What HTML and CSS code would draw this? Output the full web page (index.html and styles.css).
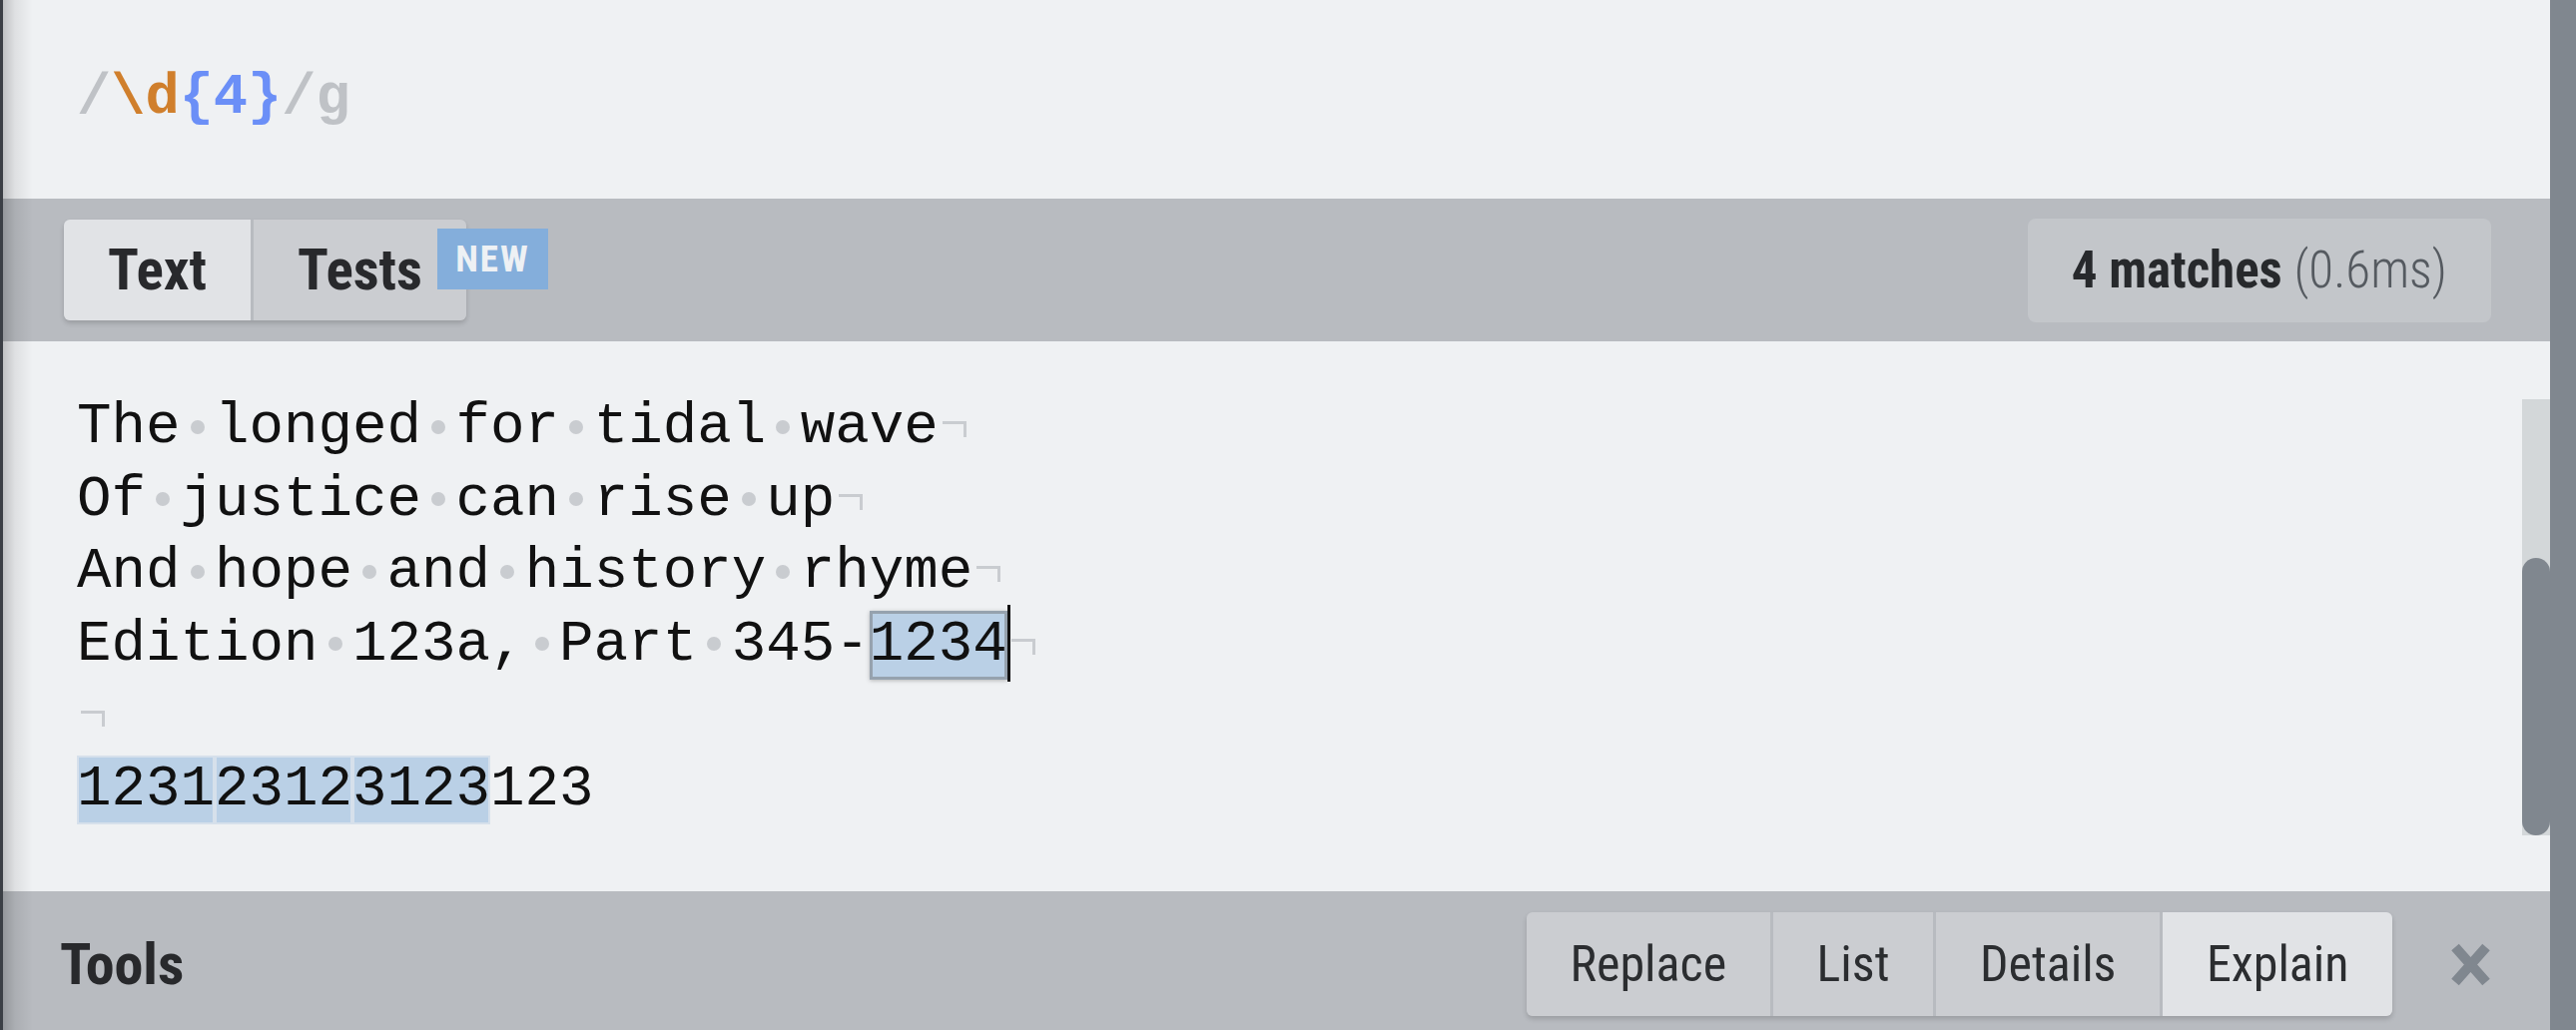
FILE: index.html
```html
<!DOCTYPE html>
<html lang="en">
<head>
<meta charset="utf-8">
<title>RegExr</title>
<link rel="stylesheet" href="styles.css">
</head>
<body>
<div class="app">
  <div class="edge"></div>
  <div class="main">
    <section class="expr">
      <span class="re"><span class="delim">/</span><span class="esc">\d</span><span class="quant">{4}</span><span class="delim">/g</span></span>
    </section>

    <div class="bar textbar">
      <div class="tabs">
        <button class="tab active">Text</button>
        <button class="tab">Tests<span class="badge">NEW</span></button>
      </div>
      <div class="matches"><b>4 matches</b> <span class="time">(0.6ms)</span></div>
    </div>

    <section class="editor">
      <div class="code">
        <div class="ln">The<span class="sp"> </span>longed<span class="sp"> </span>for<span class="sp"> </span>tidal<span class="sp"> </span>wave<i class="eol"></i></div>
        <div class="ln">Of<span class="sp"> </span>justice<span class="sp"> </span>can<span class="sp"> </span>rise<span class="sp"> </span>up<i class="eol"></i></div>
        <div class="ln">And<span class="sp"> </span>hope<span class="sp"> </span>and<span class="sp"> </span>history<span class="sp"> </span>rhyme<i class="eol"></i></div>
        <div class="ln">Edition<span class="sp"> </span>123a,<span class="sp"> </span>Part<span class="sp"> </span>345-<span class="m sel">1234</span><i class="eol"></i></div>
        <div class="ln"><i class="eol"></i></div>
        <div class="ln"><span class="m">1231</span><span class="m">2312</span><span class="m">3123</span>123</div>
      </div>
      <div class="scroll"><div class="thumb"></div></div>
    </section>

    <div class="bar toolsbar">
      <h2 class="tools-title">Tools</h2>
      <div class="tools">
        <button class="tool">Replace</button>
        <button class="tool">List</button>
        <button class="tool">Details</button>
        <button class="tool active">Explain</button>
      </div>
      <button class="close" aria-label="Close">
        <svg viewBox="0 0 43 43" width="43" height="43"><path d="M6 4 L37 39 M37 4 L6 39" stroke="#80878f" stroke-width="10" fill="none"/></svg>
      </button>
    </div>
  </div>
  <div class="strip"></div>
</div>
</body>
</html>
```

FILE: styles.css
```css
* { box-sizing: border-box; }

html, body {
  margin: 0;
  padding: 0;
  width: 2580px;
  height: 1032px;
  overflow: hidden;
  background: #eff1f3;
}

.app {
  display: flex;
  width: 2580px;
  height: 1032px;
}

.edge {
  width: 3px;
  background: #3b3f45;
  flex: none;
}

.strip {
  width: 26px;
  background: #80878f;
  flex: none;
}

.main {
  flex: 1;
  display: flex;
  flex-direction: column;
  position: relative;
  min-width: 0;
}

.main::after {
  content: "";
  position: absolute;
  top: 0;
  bottom: 0;
  left: 0;
  width: 30px;
  background: linear-gradient(to right, rgba(0,0,0,0.2), rgba(0,0,0,0.07) 40%, rgba(0,0,0,0));
  pointer-events: none;
}

/* expression */
.expr {
  height: 199px;
  flex: none;
  padding: 66px 74px 0;
  background: #eff1f3;
}

.re {
  font-family: "Liberation Mono", "DejaVu Sans Mono", monospace;
  font-weight: bold;
  font-size: 57px;
  white-space: pre;
}

.delim { color: #bfc2c6; }
.esc { color: #d07f2c; }
.quant { color: #6b8ff7; }

/* bars */
.bar {
  background: #b8bbc0;
  display: flex;
  align-items: center;
  flex: none;
  font-family: "Roboto Condensed", "Roboto", sans-serif;
  font-stretch: condensed;
  color: #2a2c2f;
}

.textbar {
  height: 143px;
  padding: 0 59px 0 61px;
  justify-content: space-between;
}

.tabs {
  display: flex;
  gap: 3px;
  border-radius: 6px;
  box-shadow: 0 3px 5px rgba(0,0,0,0.16);
}

.tab {
  position: relative;
  height: 101px;
  padding: 0 44px;
  border: 0;
  margin: 0;
  background: #cbcdd1;
  font-family: inherit;
  font-stretch: condensed;
  font-weight: bold;
  font-size: 57px;
  color: #28292c;
  line-height: 101px;
}

.tab:first-child { border-radius: 6px 0 0 6px; }
.tab:last-child { border-radius: 0 6px 6px 0; }
.tab.active { background: #e1e3e6; }

.badge {
  position: absolute;
  left: 184px;
  top: 9px;
  width: 111px;
  height: 61px;
  background: #84aedb;
  color: #eef1f4;
  font-size: 37px;
  font-weight: bold;
  letter-spacing: 2px;
  line-height: 61px;
  text-align: center;
}

.matches {
  height: 104px;
  padding: 0 44px;
  background: #c3c6ca;
  border-radius: 8px;
  font-size: 51px;
  line-height: 104px;
  white-space: nowrap;
  color: #27292c;
}

.matches b { font-weight: bold; }
.time { color: #555a60; font-weight: 300; }

/* editor */
.editor {
  flex: 1;
  position: relative;
  background: #eff1f3;
  padding: 50px 74px 0;
}

.code {
  font-family: "Liberation Mono", "DejaVu Sans Mono", monospace;
  font-size: 57.5px;
  line-height: 72.5px;
  color: #111;
}

.ln {
  height: 72.5px;
  white-space: pre;
}

.sp { position: relative; }
.sp::after {
  content: "";
  position: absolute;
  left: 10.25px;
  top: 25.5px;
  width: 14px;
  height: 14px;
  border-radius: 50%;
  background: #c9ccd0;
}

.eol {
  display: inline-block;
  position: relative;
  width: 1ch;
  height: 0;
}
.eol::before {
  content: "";
  position: absolute;
  left: 4px;
  bottom: 5px;
  width: 21px;
  height: 13px;
  border-top: 3px solid #c9ccd0;
  border-right: 3px solid #c9ccd0;
}

.m {
  background: #bad0e6;
  padding: 1px 0 3px;
  box-shadow: inset 0 0 0 2px #d6e0eb;
}

.sel {
  position: relative;
  box-shadow: inset 0 0 0 3px #96a2ae, 0 1px 4px rgba(0,0,0,0.25);
}
.sel::after {
  content: "";
  position: absolute;
  right: -3px;
  top: -6px;
  bottom: -2px;
  width: 3px;
  background: #111;
}

.scroll {
  position: absolute;
  right: 0;
  top: 58px;
  width: 28px;
  height: 437px;
  background: #d3d7d9;
  display: flex;
  flex-direction: column;
  justify-content: flex-end;
}
.thumb {
  height: 278px;
  background: #80878f;
  border-radius: 14px;
}

/* tools bar */
.toolsbar {
  height: 139px;
  padding: 7px 58px 0 57px;
}

.tools-title {
  margin: 0;
  font-size: 58px;
  font-weight: bold;
  color: #28292c;
}

.tools {
  margin-left: auto;
  display: flex;
  gap: 3.5px;
  border-radius: 6px;
  box-shadow: 0 3px 5px rgba(0,0,0,0.16);
}

.tool {
  height: 104px;
  padding: 0 43.5px;
  border: 0;
  margin: 0;
  background: #cbcdd1;
  font-family: inherit;
  font-stretch: condensed;
  font-size: 50px;
  color: #2b2d30;
  line-height: 104px;
}
.tool:first-child { border-radius: 6px 0 0 6px; }
.tool:last-child { border-radius: 0 6px 6px 0; }
.tool.active { background: #e1e3e6; }

.close {
  margin-left: 57px;
  padding: 0;
  border: 0;
  background: none;
  width: 43px;
  height: 43px;
  display: flex;
}
```
